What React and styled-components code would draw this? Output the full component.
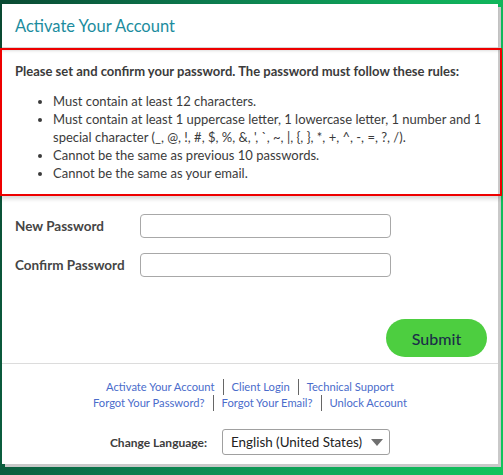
import React from "react";
import styled, { createGlobalStyle } from "styled-components";

const GlobalStyle = createGlobalStyle`
  html, body { margin: 0; padding: 0; }
  body {
    width: 503px;
    height: 475px;
    overflow: hidden;
    background: linear-gradient(100deg, #0a4a33 0%, #0c7a4e 35%, #0fa85a 70%, #12c45c 100%);
    font-family: Lato, "Open Sans", sans-serif;
  }
`;

const Page = styled.div`
  padding: 4px 5px 0 2px;
  height: 475px;
  box-sizing: border-box;
`;

const Card = styled.div`
  background: #fff;
  height: 460px;
  box-shadow: 3px 3px 0 #c9c9c9;
  display: flex;
  flex-direction: column;
  & > * { flex-shrink: 0; }
`;

const Header = styled.div`
  height: 43px;
  display: flex;
  align-items: center;
  padding-left: 13px;
  border-bottom: 1px solid #d8d8d8;
  box-shadow: 0 1px 2px rgba(0, 0, 0, 0.12);
`;

const Title = styled.h1`
  margin: 0;
  font-weight: 400;
  font-size: 16.5px;
  color: #1b8c9e;
`;

const RulesBox = styled.div`
  margin: 0 -4px 0 -2px;
  border: 2px solid #ee0000;
  padding: 12px 14px 12px 13px;
  box-shadow: inset 0 3px 3px -2px rgba(0, 0, 0, 0.12), 0 3px 4px rgba(0, 0, 0, 0.15);
  color: #3b3b3b;
  font-size: 13px;
  line-height: 18px;
`;

const Intro = styled.p`
  margin: 0 0 12px 0;
  font-weight: 700;
`;

const Rules = styled.ul`
  margin: 0;
  padding-left: 38px;
  li { line-height: 18px; }
`;

const Form = styled.div`
  display: flex;
  flex-direction: column;
  gap: 15px;
  padding: 18px 0 0 13px;
`;

const Row = styled.div`
  display: flex;
  align-items: center;
`;

const Label = styled.label`
  width: 125px;
  font-weight: 700;
  font-size: 13.5px;
  color: #454545;
`;

const Input = styled.input`
  width: 251px;
  height: 24px;
  box-sizing: border-box;
  border: 1px solid #a8a8a8;
  border-radius: 4px;
  margin: 0;
`;

const Actions = styled.div`
  display: flex;
  justify-content: flex-end;
  padding: 42px 11px 0 0;
`;

const SubmitButton = styled.button`
  width: 101px;
  height: 38px;
  border: none;
  border-radius: 19px;
  background: #4dce40;
  color: #1b2d48;
  font-family: Lato, sans-serif;
  font-size: 16px;
  font-weight: 500;
  padding: 0;
`;

const Footer = styled.div`
  margin-top: 6px;
  border-top: 1px solid #dcdcdc;
  padding-top: 15px;
  display: flex;
  flex-direction: column;
  align-items: center;
`;

const LinkLine = styled.div`
  display: flex;
  font-size: 11.2px;
  line-height: 16px;
`;

const FooterLink = styled.a`
  color: #4a6ccb;
  text-decoration: none;
  padding: 0 8px;
  border-left: ${(p) => (p.$first ? "none" : "1px solid #666")};
`;

const LangRow = styled.div`
  display: flex;
  align-items: center;
  margin-top: 18px;
  gap: 15px;
`;

const LangLabel = styled.span`
  font-size: 12px;
  font-weight: 700;
  color: #3d3d3d;
`;

const Select = styled.div`
  width: 168px;
  height: 26px;
  box-sizing: border-box;
  border: 1px solid #a0a0a0;
  border-radius: 3px;
  display: flex;
  align-items: center;
  justify-content: space-between;
  padding: 0 6px 0 8px;
  font-size: 13.4px;
  color: #222;
`;

const Caret = styled.span`
  width: 0;
  height: 0;
  border-left: 6px solid transparent;
  border-right: 6px solid transparent;
  border-top: 7px solid #707070;
`;

const links1 = ["Activate Your Account", "Client Login", "Technical Support"];
const links2 = ["Forgot Your Password?", "Forgot Your Email?", "Unlock Account"];

export default function App() {
  return (
    <>
      <GlobalStyle />
      <Page>
        <Card>
          <Header>
            <Title>Activate Your Account</Title>
          </Header>
          <RulesBox>
            <Intro>
              Please set and confirm your password. The password must follow these rules:
            </Intro>
            <Rules>
              <li>Must contain at least 12 characters.</li>
              <li>
                Must contain at least 1 uppercase letter, 1 lowercase letter, 1 number and 1
                <br />
                special character (_, @, !, #, $, %, &amp;, ', `, ~, |, {"{"}, {"}"}, *, +, ^, -, =, ?, /).
              </li>
              <li>Cannot be the same as previous 10 passwords.</li>
              <li>Cannot be the same as your email.</li>
            </Rules>
          </RulesBox>
          <Form>
            <Row>
              <Label>New Password</Label>
              <Input type="password" />
            </Row>
            <Row>
              <Label>Confirm Password</Label>
              <Input type="password" />
            </Row>
          </Form>
          <Actions>
            <SubmitButton>Submit</SubmitButton>
          </Actions>
          <Footer>
            <LinkLine>
              {links1.map((l, i) => (
                <FooterLink key={l} href="#" $first={i === 0}>{l}</FooterLink>
              ))}
            </LinkLine>
            <LinkLine>
              {links2.map((l, i) => (
                <FooterLink key={l} href="#" $first={i === 0}>{l}</FooterLink>
              ))}
            </LinkLine>
            <LangRow>
              <LangLabel>Change Language:</LangLabel>
              <Select>
                <span>English (United States)</span>
                <Caret />
              </Select>
            </LangRow>
          </Footer>
        </Card>
      </Page>
    </>
  );
}
